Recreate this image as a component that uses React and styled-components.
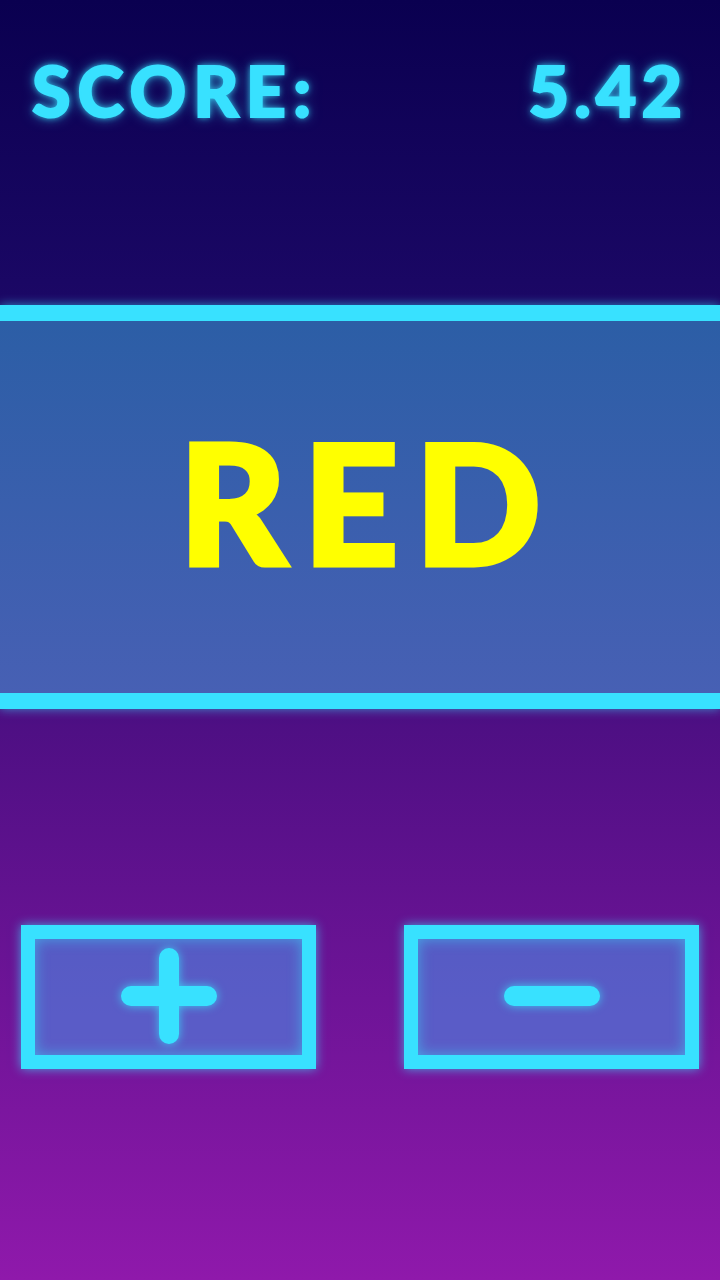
import React from 'react'
import styled, { createGlobalStyle } from 'styled-components'

const NEON = '#38e1ff'

const Global = createGlobalStyle`
  html, body {
    margin: 0;
    padding: 0;
  }
  body {
    font-family: Lato, "Open Sans", sans-serif;
  }
`

const Screen = styled.div`
  width: 720px;
  height: 1280px;
  display: flex;
  flex-direction: column;
  background: linear-gradient(180deg, #0a0050 0%, #1a0764 22%, #8f19ab 100%);
  overflow: hidden;
`

const ScoreBar = styled.div`
  height: 305px;
  box-sizing: border-box;
  display: flex;
  justify-content: space-between;
  align-items: flex-start;
  padding: 55px 33px 0 32px;
`

const ScoreText = styled.div`
  font-family: Lato, sans-serif;
  font-weight: 900;
  font-size: 70px;
  line-height: 1;
  letter-spacing: ${props => props.spacing || '7px'};
  color: ${NEON};
  -webkit-text-stroke: 2px ${NEON};
  text-shadow: 0 0 6px rgba(56, 225, 255, 0.9), 0 0 14px rgba(56, 225, 255, 0.6);
`

const Band = styled.div`
  height: 372px;
  border-top: 16px solid ${NEON};
  border-bottom: 16px solid ${NEON};
  background: linear-gradient(180deg, #2c5ea6 0%, #4760b4 100%);
  box-shadow: 0 0 10px rgba(56, 225, 255, 0.6);
  display: flex;
  align-items: center;
  justify-content: center;
`

const Word = styled.div`
  font-family: Lato, sans-serif;
  font-weight: 900;
  font-size: 165px;
  line-height: 1;
  letter-spacing: 17px;
  margin: 0 -17px 12px 0;
  color: ${props => props.color};
  -webkit-text-stroke: 5px ${props => props.color};
`

const Controls = styled.div`
  margin-top: 216px;
  padding: 0 21px;
  display: grid;
  grid-template-columns: 295px 295px;
  justify-content: space-between;
`

const Pad = styled.button`
  height: 144px;
  box-sizing: border-box;
  border: 14px solid ${NEON};
  background: rgba(75, 140, 230, 0.6);
  box-shadow: 0 0 10px rgba(56, 225, 255, 0.7), inset 0 0 14px rgba(56, 225, 255, 0.55);
  display: flex;
  align-items: center;
  justify-content: center;
  padding: 0;
  cursor: pointer;
`

const Sign = styled.svg`
  width: 100px;
  height: 100px;
  margin-top: -3px;
  overflow: visible;
  filter: drop-shadow(0 0 5px rgba(56, 225, 255, 0.8));
`

const Plus = () => (
  <Sign viewBox="0 0 100 100">
    <path d="M50 12 V88 M12 50 H88" stroke={NEON} strokeWidth="20" strokeLinecap="round" fill="none" />
  </Sign>
)

const Minus = () => (
  <Sign viewBox="0 0 100 100">
    <path d="M12 50 H88" stroke={NEON} strokeWidth="20" strokeLinecap="round" fill="none" />
  </Sign>
)

export default function App() {
  return (
    <Screen>
      <Global />
      <ScoreBar>
        <ScoreText>SCORE:</ScoreText>
        <ScoreText spacing="5px">5.42</ScoreText>
      </ScoreBar>
      <Band>
        <Word color="#ffff00">RED</Word>
      </Band>
      <Controls>
        <Pad aria-label="plus"><Plus /></Pad>
        <Pad aria-label="minus"><Minus /></Pad>
      </Controls>
    </Screen>
  )
}
